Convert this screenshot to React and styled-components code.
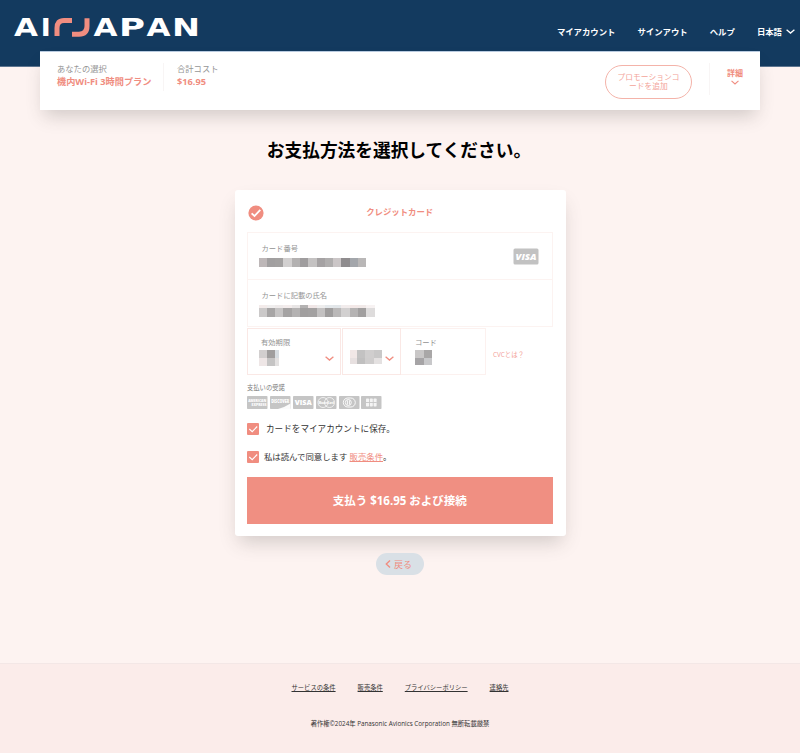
import React, { useState } from 'react';
import styled, { createGlobalStyle } from 'styled-components';

const NUMBER_BLOCKS = [['#bdb7b8', '#a19fa0', '#a3a1a1', '#d2d0d0', '#b3b1b1', '#9f9d9e', '#c4c2c2', '#a5a2a3', '#b0aeae', '#cbc6c7', '#8f8c8e', '#a3a6ab', '#b9b7b7']];
const NAME_BLOCKS = [
  ['#f3ebea', '#f0eeee', '#eeeaea', '#f3ecec', '#e8e5e5', '#b4b2b2', '#f0e6e6', '#eeeded', '#e4e8eb', '#e2e6e9', '#f2ecec', '#f3e8e7', '#f1e9e8', '#f7f2f2'],
  ['#cbc9c9', '#a7a5a5', '#c6c4c4', '#a5a3a3', '#b4b2b2', '#a19f9f', '#a3a1a1', '#c3c1c1', '#9f9d9d', '#bab8b8', '#d2d0d0', '#b5b3b3', '#a19f9f', '#dedcdc'],
];
const MONTH_BLOCKS = [['#d2cfcf', '#a09e9e', '#d7dde2'], ['#eee6e6', '#c5c4c4', '#e3e1e1']];
const YEAR_BLOCKS = [['#f1e7e6', '#c3c2c2', '#d0cece', '#c9c8c8'], ['#e7e0e0', '#c0bfbf', '#cfcdcd', '#e4e1e1']];
const CODE_BLOCKS = [['#c9c7c7', '#a9a7a7'], ['#a6a4a6', '#c8c8ca']];

const Mask = ({ rows, cols, heights }) => (
  <MaskGrid $cols={cols} $rows={heights}>
    {rows.flat().map((color, i) => (
      <MaskCell key={i} $color={color} />
    ))}
  </MaskGrid>
);

const Chevron = ({ width = 9, height = 5, stroke = 1.3 }) => (
  <svg width={width} height={height} viewBox="0 0 9 5" fill="none" stroke="currentColor" strokeWidth={stroke}>
    <path d="M.6 .7 4.5 4.1 8.4 .7" />
  </svg>
);

const Tick = () => (
  <svg width="12" height="12" viewBox="0 0 12 12" fill="none" stroke="#fff" strokeWidth="1.1">
    <path d="M2.3 6 5.2 8.7 10.2 3.5" />
  </svg>
);

const Logo = () => (
  <svg width="188" height="40" viewBox="0 -8 188 40" role="img" aria-label="AIRJAPAN">
    <LogoText y="20" x="0" textLength="24">A</LogoText>
    <LogoText y="20" x="26.7" textLength="10">I</LogoText>
    <path d="M43 20V12Q43 4.4 50 4.4H58" fill="none" stroke="#f08d80" strokeWidth="5" />
    <path d="M58 18.2H65Q73 18.2 73 10V2.3" fill="none" stroke="#f08d80" strokeWidth="5" />
    <LogoText y="20" x="79.5" textLength="24">A</LogoText>
    <LogoText y="20" x="105" textLength="26">P</LogoText>
    <LogoText y="20" x="132.5" textLength="24">A</LogoText>
    <LogoText y="20" x="158" textLength="28">N</LogoText>
  </svg>
);

const BrandIcon = ({ children }) => (
  <svg width="20.5" height="13" viewBox="0 0 20.5 13">
    <rect width="20.5" height="13" rx="0.8" fill="#c5c5c5" />
    {children}
  </svg>
);

const App = () => {
  const [saveCard, setSaveCard] = useState(true);
  const [agreed, setAgreed] = useState(true);

  return (
    <Page>
      <GlobalStyle />
      <Header>
        <Logo />
        <Nav>
          <NavItem>マイアカウント</NavItem>
          <NavItem>サインアウト</NavItem>
          <NavItem>ヘルプ</NavItem>
          <NavItem>
            日本語
            <Chevron />
          </NavItem>
        </Nav>
      </Header>

      <Summary>
        <SummaryPlan>
          <SummaryLabel>あなたの選択</SummaryLabel>
          <SummaryValue>機内Wi-Fi 3時間プラン</SummaryValue>
        </SummaryPlan>
        <SummaryCost>
          <SummaryLabel>合計コスト</SummaryLabel>
          <SummaryValue>$16.95</SummaryValue>
        </SummaryCost>
        <PromoButton>
          プロモーションコ
          <br />
          ードを追加
        </PromoButton>
        <Details>
          詳細
          <Chevron width={8} height={5} />
        </Details>
      </Summary>

      <Main>
        <Title>お支払方法を選択してください。</Title>
        <Card>
          <CardHead>
            <svg width="16" height="16" viewBox="0 0 16 16">
              <circle cx="8" cy="8" r="7.6" fill="#f08d80" />
              <path d="M3.6 8.3 6.5 11 12.3 4.9" fill="none" stroke="#fff" strokeWidth="1.8" />
            </svg>
            <CardTitle>クレジットカード</CardTitle>
          </CardHead>

          <Field $height={48}>
            <FieldBody>
              <FieldLabel>カード番号</FieldLabel>
              <Mask rows={NUMBER_BLOCKS} cols="repeat(13, 8.3px)" heights="9px" />
            </FieldBody>
            <svg width="26" height="17" viewBox="0 0 26 17">
              <rect x="0.5" y="0.5" width="25" height="16" rx="1.5" fill="#c2c2c2" />
              <BrandText x="13" y="12" fontSize="9.5" textLength="21" fontStyle="italic">VISA</BrandText>
            </svg>
          </Field>
          <Field $height={47} $joined>
            <FieldBody>
              <FieldLabel>カードに記載の氏名</FieldLabel>
              <Mask rows={NAME_BLOCKS} cols="repeat(14, 8.3px)" heights="3px 9px" />
            </FieldBody>
          </Field>
          <FieldRow>
            <SmallField $width={94}>
              <FieldBody>
                <FieldLabel>有効期限</FieldLabel>
                <Mask rows={MONTH_BLOCKS} cols="8px 8px 4px" heights="8px 8px" />
              </FieldBody>
              <Chevron />
            </SmallField>
            <SmallField $width={59} $gap={1} $end>
              <YearMask>
                <Mask rows={YEAR_BLOCKS} cols="7px 8px 9px 8px" heights="8px 6px" />
              </YearMask>
              <Chevron />
            </SmallField>
            <SmallField $width={85} $code>
              <FieldBody>
                <FieldLabel>コード</FieldLabel>
                <Mask rows={CODE_BLOCKS} cols="9px 8px" heights="8px 7px" />
              </FieldBody>
            </SmallField>
            <CvcLink>CVCとは？</CvcLink>
          </FieldRow>

          <AcceptedLabel>支払いの受諾</AcceptedLabel>
          <Brands>
            <BrandIcon>
              <BrandText x="10.2" y="6.2" fontSize="4.2" textLength="18">AMERICAN</BrandText>
              <BrandText x="12" y="10" fontSize="4.2" textLength="15">EXPRESS</BrandText>
            </BrandIcon>
            <BrandIcon>
              <path d="M8 13Q15 11 20.5 7.4V13Z" fill="#fbfbfb" />
              <BrandText x="10.2" y="6.7" fontSize="4.4" textLength="18">DISCOVER</BrandText>
            </BrandIcon>
            <BrandIcon>
              <BrandText x="10.3" y="9.3" fontSize="7.4" textLength="17">VISA</BrandText>
            </BrandIcon>
            <BrandIcon>
              <g fill="none" stroke="#fff" strokeWidth="0.7">
                <circle cx="7" cy="6.5" r="5" />
                <circle cx="13.5" cy="6.5" r="5" />
              </g>
              <BrandText x="10.3" y="8" fontSize="3.7" textLength="15">MasterCard</BrandText>
            </BrandIcon>
            <BrandIcon>
              <g fill="none" stroke="#fff" strokeWidth="0.9">
                <rect x="4.3" y="2" width="12" height="9" rx="4.5" />
                <circle cx="9.3" cy="6.5" r="3" />
                <path d="M8.4 4.4V8.6M10.4 4.4V8.6" />
              </g>
            </BrandIcon>
            <BrandIcon>
              <g fill="#f4f4f4">
                <rect x="5" y="2.5" width="3" height="8" rx="0.7" />
                <rect x="8.8" y="2.5" width="3" height="8" rx="0.7" />
                <rect x="12.6" y="2.5" width="3" height="8" rx="0.7" />
              </g>
              <path d="M4.7 6.5H15.8" stroke="#c5c5c5" strokeWidth="0.9" />
            </BrandIcon>
          </Brands>

          <CheckRow $top={14} $gap={7}>
            <Checkbox aria-pressed={saveCard} onClick={() => setSaveCard(!saveCard)}>
              {saveCard && <Tick />}
            </Checkbox>
            <CheckText $size={8.6}>カードをマイアカウントに保存。</CheckText>
          </CheckRow>
          <CheckRow $top={16} $gap={5}>
            <Checkbox aria-pressed={agreed} onClick={() => setAgreed(!agreed)}>
              {agreed && <Tick />}
            </Checkbox>
            <CheckText $size={8.4}>
              私は読んで同意します <TermsLink>販売条件</TermsLink>。
            </CheckText>
          </CheckRow>

          <PayButton>支払う $16.95 および接続</PayButton>
        </Card>

        <BackButton>
          <svg width="6" height="8" viewBox="0 0 6 8" fill="none" stroke="currentColor" strokeWidth="1.4">
            <path d="M5 .5 1.3 4 5 7.5" />
          </svg>
          戻る
        </BackButton>
      </Main>

      <Footer>
        <FooterLinks>
          <FooterLink>サービスの条件</FooterLink>
          <FooterLink>販売条件</FooterLink>
          <FooterLink>プライバシーポリシー</FooterLink>
          <FooterLink>連絡先</FooterLink>
        </FooterLinks>
        <Copyright>著作権©2024年 Panasonic Avionics Corporation 無断転載厳禁</Copyright>
      </Footer>
    </Page>
  );
};

// Styled Components
const GlobalStyle = createGlobalStyle`
  * {
    box-sizing: border-box;
  }

  body {
    margin: 0;
    background: #fdf3f1;
    font-family: 'Open Sans', 'Noto Sans CJK JP', sans-serif;
  }

  button {
    font-family: inherit;
    padding: 0;
    border: none;
    cursor: pointer;
  }

  svg {
    display: block;
    flex-shrink: 0;
    overflow: visible;
  }
`;

const Page = styled.div`
  display: flex;
  flex-direction: column;
  width: 800px;
  height: 753px;
  overflow: hidden;
`;

const Header = styled.header`
  display: flex;
  justify-content: space-between;
  align-items: flex-start;
  height: 67px;
  flex-shrink: 0;
  padding: 8px 5px 0 14px;
  background: #133a5f;
  border-bottom: 1px solid #5d7590;
`;

const LogoText = styled.text.attrs({ lengthAdjust: 'spacingAndGlyphs' })`
  font-family: 'DejaVu Sans', sans-serif;
  font-weight: bold;
  font-size: 24.5px;
  fill: #fff;
`;

const Nav = styled.nav`
  display: flex;
  gap: 22px;
  padding-top: 16.5px;
`;

const NavItem = styled.a`
  display: flex;
  align-items: center;
  gap: 4px;
  color: #fff;
  font-size: 8.4px;
  font-weight: 700;
  line-height: 14px;
`;

const Summary = styled.section`
  display: flex;
  flex-shrink: 0;
  width: 720px;
  height: 59px;
  margin: -16px auto 0;
  padding: 11px 17px 0;
  position: relative;
  background: #fff;
  border-top: 1px solid #b9cbe0;
  box-shadow: 0 10px 18px -4px rgba(60, 60, 55, 0.22);
`;

const SummaryPlan = styled.div`
  width: 107px;
  height: 28px;
  border-right: 1px solid #f8f5f5;
`;

const SummaryCost = styled.div`
  flex: 1;
  padding-left: 13px;
`;

const SummaryLabel = styled.div`
  color: #969696;
  font-size: 8.3px;
  line-height: 12px;
`;

const SummaryValue = styled.div`
  color: #f08d80;
  font-size: 9.2px;
  font-weight: 700;
  line-height: 13px;
  white-space: nowrap;
`;

const PromoButton = styled.button`
  width: 87px;
  height: 34px;
  margin: 2px 17px 0 0;
  background: #fff;
  border: 1px solid #f4b3a9;
  border-radius: 17px;
  color: #f3a499;
  font-size: 7.75px;
  line-height: 9px;
`;

const Details = styled.div`
  display: flex;
  flex-direction: column;
  align-items: center;
  width: 34px;
  height: 32px;
  padding: 4px 0 0 17px;
  border-left: 1px solid #f8f5f5;
  color: #f08d80;
  font-size: 8px;
  font-weight: 700;
  line-height: 12px;
  white-space: nowrap;

  svg {
    margin-top: 1px;
  }
`;

const Main = styled.main`
  display: flex;
  flex: 1;
  flex-direction: column;
  align-items: center;
`;

const Title = styled.h1`
  margin: 28px 0 27px;
  color: #000;
  font-size: 17.7px;
  font-weight: 700;
  line-height: 25px;
  transform: translateX(-1px);
`;

const Card = styled.section`
  width: 331px;
  height: 346px;
  padding: 12px 13px 12px 12.5px;
  background: #fff;
  border-radius: 3px;
  box-shadow: 0 10px 18px -4px rgba(60, 60, 55, 0.22);
`;

const CardHead = styled.div`
  display: flex;
  align-items: center;
  height: 30px;
  padding: 0 17px 8px 1px;
`;

const CardTitle = styled.h2`
  flex: 1;
  margin: 0;
  color: #f08d80;
  font-size: 8.4px;
  font-weight: 700;
  line-height: 14px;
  text-align: center;
  transform: translateY(-1px);
`;

const Field = styled.div`
  display: flex;
  align-items: center;
  justify-content: space-between;
  width: 306px;
  height: ${props => props.$height}px;
  padding: 0 13px 0 10.5px;
  border: 1px solid #fcf3f1;
  border-top-width: ${props => props.$joined ? 0 : 1}px;
`;

const FieldBody = styled.div`
  align-self: flex-start;
  padding-top: 10px;
`;

const FieldLabel = styled.div`
  padding-left: 3px;
  margin-bottom: 4px;
  color: #939393;
  font-size: 7.3px;
  line-height: 11px;
`;

const MaskGrid = styled.div`
  display: grid;
  grid-template-columns: ${props => props.$cols};
  grid-template-rows: ${props => props.$rows};
`;

const MaskCell = styled.span`
  background: ${props => props.$color};
`;

const FieldRow = styled.div`
  display: flex;
  align-items: center;
  margin-top: 1px;
`;

const SmallField = styled.div`
  display: flex;
  align-items: center;
  justify-content: space-between;
  width: ${props => props.$width}px;
  height: 47px;
  margin-left: ${props => props.$gap || 0}px;
  padding: 0 6px 0 ${props => props.$code ? 14 : props.$end ? 7 : 11}px;
  border: 1px solid ${props => props.$code ? '#fcf1ef' : '#fae8e5'};
  border-left-width: ${props => props.$code ? 0 : 1}px;
  color: #f08d80;

  > svg {
    margin-top: 14px;
  }

  ${FieldBody} {
    padding-top: 8px;
  }

  ${FieldLabel} {
    padding-left: ${props => props.$code ? 0 : 2}px;
    margin-bottom: 2px;
  }
`;

const YearMask = styled.div`
  padding-top: 11px;
`;

const CvcLink = styled.a`
  margin-left: 7px;
  padding-top: 6px;
  color: #f3a097;
  font-size: 6.4px;
`;

const AcceptedLabel = styled.div`
  margin-top: 8px;
  color: #7b7b7b;
  font-size: 6.3px;
  line-height: 10px;
`;

const Brands = styled.div`
  display: flex;
  gap: 2.4px;
  margin-top: 3px;
`;

const BrandText = styled.text.attrs({ textAnchor: 'middle', lengthAdjust: 'spacingAndGlyphs' })`
  font-family: 'Open Sans', sans-serif;
  font-weight: 800;
  fill: #fff;
`;

const CheckRow = styled.div`
  display: flex;
  align-items: center;
  gap: ${props => props.$gap}px;
  height: 12px;
  margin-top: ${props => props.$top}px;
`;

const Checkbox = styled.button`
  width: 12px;
  height: 12px;
  background: #f08d80;
  border-radius: 1px;
`;

const CheckText = styled.span`
  color: #333;
  font-size: ${props => props.$size}px;
  line-height: 12px;
`;

const TermsLink = styled.a`
  color: #f08d80;
  text-decoration: underline;
`;

const PayButton = styled.button`
  display: block;
  width: 305.5px;
  height: 47px;
  margin-top: 13.5px;
  background: #f08f82;
  color: #fff;
  font-size: 11.5px;
  font-weight: 700;
`;

const BackButton = styled.button`
  display: flex;
  align-items: center;
  justify-content: center;
  gap: 3px;
  width: 48px;
  height: 22px;
  margin-top: 17px;
  padding-right: 3px;
  background: #d9e0e6;
  border-radius: 11px;
  color: #f08d80;
  font-size: 9px;
`;

const Footer = styled.footer`
  display: flex;
  flex-direction: column;
  align-items: center;
  height: 90px;
  flex-shrink: 0;
  padding-top: 18px;
  background: #fbecea;
  border-top: 1px solid #f3e7e6;
  color: #333;
  font-size: 6.3px;
  line-height: 12px;
`;

const FooterLinks = styled.div`
  display: flex;
  gap: 22px;
`;

const FooterLink = styled.a`
  text-decoration: underline;
`;

const Copyright = styled.div`
  margin-top: 24px;
`;

export default App;
